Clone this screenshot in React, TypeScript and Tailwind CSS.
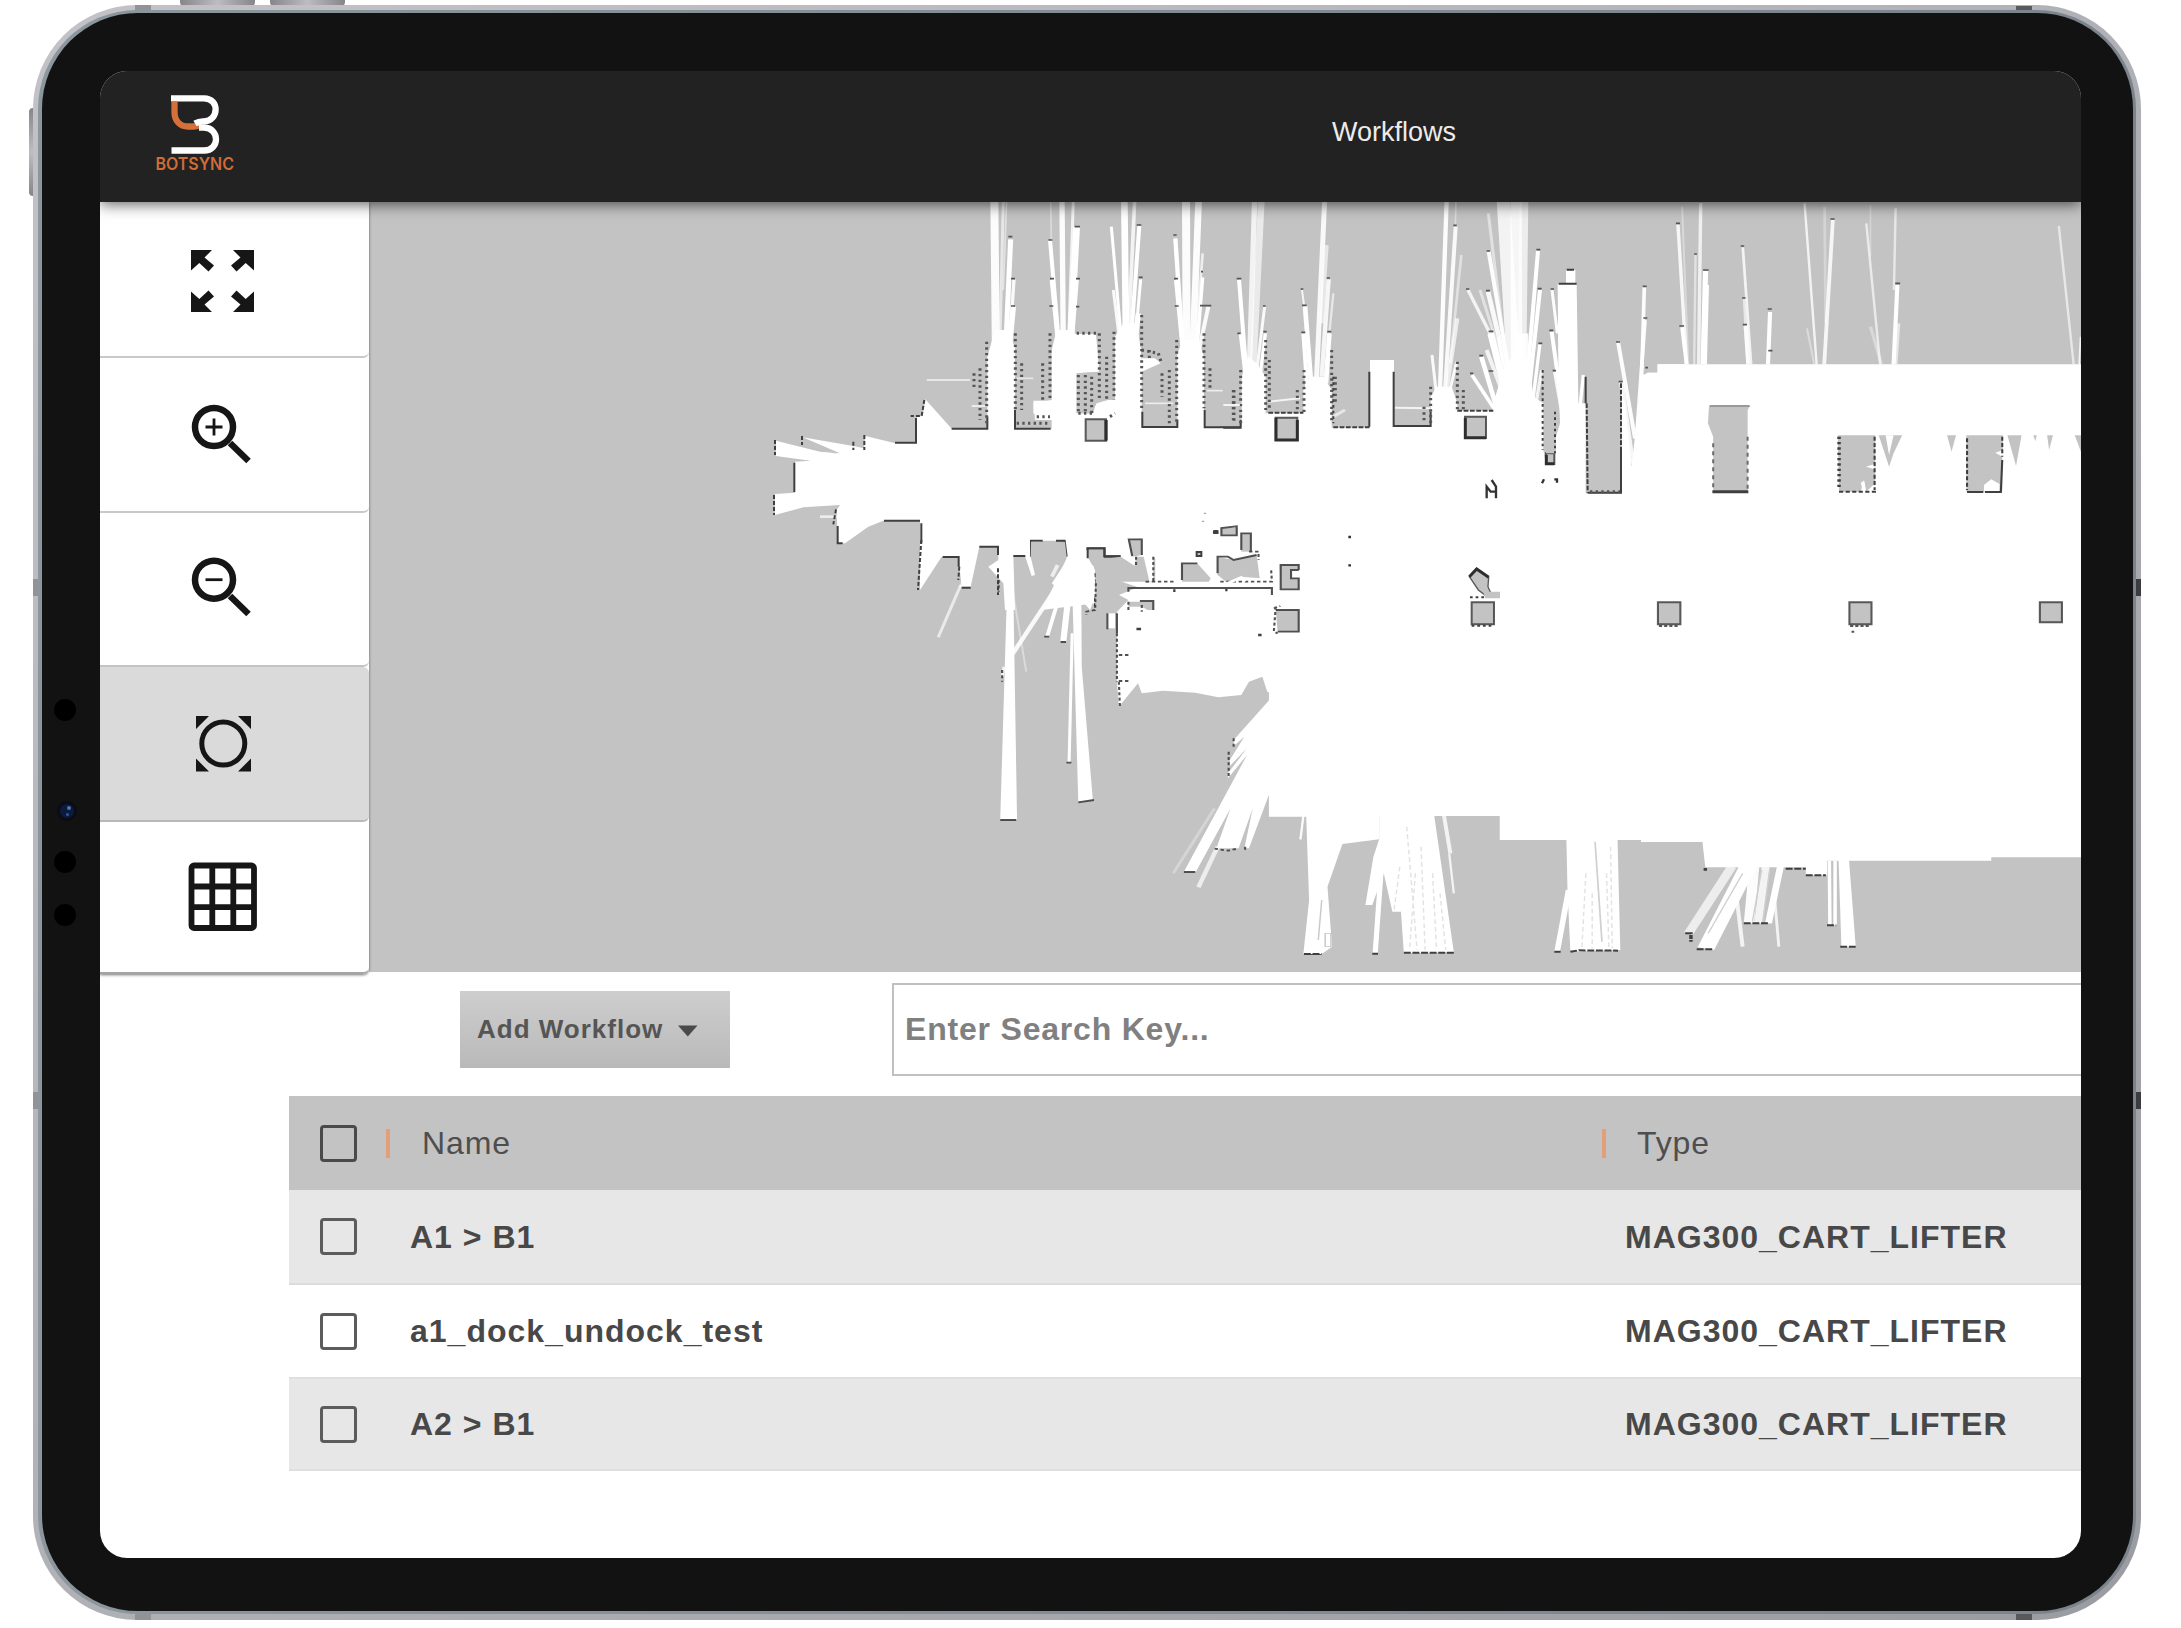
import type { ReactNode } from "react";

type Ray = [number, number, number, number, number, number?];

const Rays = ({ data }: { data: Ray[] }) => (
  <g stroke="#fff" fill="none">
    {data.map(([x1, y1, x2, y2, w, o], i) => (
      <line key={i} x1={x1} y1={y1} x2={x2} y2={y2} strokeWidth={w} strokeOpacity={o ?? 1} />
    ))}
  </g>
);

const GRAY = "#c3c3c3";
const WALL = "#3f3f3f";

const raysA: Ray[] = [
  [763, 30, 768, 520, 24, 0.95],
  [790, 30, 780, 450, 9, 0.6],
  [812, 148, 795, 520, 15],
  [822, 268, 805, 520, 10, 0.9],
  [820, 350, 800, 560, 16],
  [800, 30, 790, 300, 5, 0.5],
  [930, 150, 962, 520, 12],
  [935, 270, 960, 520, 12],
  [966, 30, 970, 480, 16, 0.95],
  [1000, 30, 985, 480, 9, 0.8],
  [1010, 110, 990, 480, 20],
  [1012, 270, 995, 480, 9],
  [932, 30, 934, 150, 5, 0.4],
  [1114, 110, 1145, 460, 9],
  [1120, 300, 1140, 460, 9, 0.9],
  [1153, 30, 1158, 440, 20],
  [1184, 30, 1165, 440, 11, 0.8],
  [1198, 108, 1172, 460, 12],
  [1202, 268, 1185, 460, 9],
  [1195, 370, 1180, 500, 16],
  [1306, 145, 1330, 500, 13],
  [1308, 270, 1330, 500, 12],
  [1338, 30, 1340, 490, 24, 0.95],
  [1376, 30, 1358, 490, 20, 0.95],
  [1388, 190, 1365, 490, 8, 0.7],
  [1388, 262, 1370, 490, 10],
  [1405, 350, 1375, 490, 12, 0.9],
  [560, 570, 690, 570, 5, 0.8],
  [695, 648, 742, 648, 5, 0.8],
  [1215, 640, 1300, 640, 5, 0.7],
  [1400, 602, 1448, 602, 5, 0.7],
  [1450, 645, 1500, 645, 6, 0.8],
  [830, 565, 880, 565, 5, 0.6],
  [240, 980, 290, 980, 8, 0.7],
];

const raysB: Ray[] = [
  [868, 400, 860, 788, 8],
  [840, 240, 712, 462, 12, 0.9],
  [845, 250, 803, 408, 10],
  [862, 250, 845, 424, 16],
  [600, 190, 575, 262, 5, 0.6],
  [577, 255, 518, 412, 8, 0.65],
  [708, 240, 748, 515, 5, 0.4],
  [1240, 925, 1132, 1120, 8, 0.3],
  [1248, 1040, 1198, 1162, 12, 0.7],
  [1472, 950, 1464, 1018, 4, 0.8],
  [830, 195, 815, 230, 10, 0.7],
  [690, 500, 685, 530, 8, 0.8],
];

const raysC: Ray[] = [
  [57, 268, 80, 560, 12],
  [60, 430, 75, 560, 8],
  [104, 30, 88, 540, 16, 0.8],
  [124, 30, 98, 560, 20, 0.65],
  [134, 350, 108, 560, 9, 0.9],
  [136, 430, 120, 560, 10],
  [246, 300, 252, 345, 6, 0.8],
  [255, 348, 275, 600, 14],
  [250, 430, 262, 600, 12],
  [314, 30, 288, 600, 15, 0.9],
  [326, 268, 305, 560, 13, 0.85],
  [320, 165, 305, 400, 12, 0.6],
  [340, 310, 315, 560, 7, 0.6],
  [328, 430, 318, 580, 14],
  [680, 30, 660, 600, 13, 0.95],
  [707, 110, 675, 600, 12, 0.9],
  [724, 195, 690, 520, 8, 0.5],
  [712, 385, 680, 600, 12, 0.7],
  [636, 495, 650, 620, 9, 0.9],
  [710, 515, 690, 600, 9, 0.9],
  [708, 30, 706, 110, 5, 0.4],
  [850, 30, 885, 600, 40, 0.8],
  [888, 30, 890, 600, 34, 0.85],
  [912, 30, 905, 600, 26, 0.7],
  [805, 70, 860, 520, 9, 0.5],
  [806, 185, 880, 620, 12, 0.95],
  [744, 300, 815, 440, 10, 0.8],
  [780, 300, 850, 520, 9, 0.5],
  [804, 305, 880, 620, 14, 0.9],
  [812, 430, 870, 660, 20],
  [784, 500, 835, 670, 14],
  [756, 555, 825, 660, 11],
  [835, 440, 870, 640, 10, 0.9],
  [800, 480, 860, 640, 12, 0.8],
  [954, 182, 915, 640, 12],
  [960, 300, 925, 620, 12],
  [960, 460, 930, 700, 10],
  [965, 540, 938, 700, 10, 0.8],
  [905, 430, 900, 640, 40, 0.9],
  [996, 300, 1012, 430, 9, 0.95],
  [995, 425, 1025, 640, 12],
  [1003, 545, 1030, 700, 8, 0.9],
  [1090, 555, 1080, 650, 10],
  [1194, 455, 1245, 745, 12, 0.95],
  [1204, 575, 1238, 820, 14, 0.85],
  [1273, 290, 1262, 660, 11, 0.95],
  [1275, 390, 1250, 740, 11, 0.95],
  [145, 635, 240, 625, 6, 0.8],
  [525, 653, 630, 655, 6, 0.8],
  [340, 680, 375, 660, 9, 0.6],
];

const raysD: Ray[] = [
  [110, 103, 135, 523, 10, 0.85],
  [122, 50, 140, 523, 6, 0.35],
  [122, 412, 135, 523, 11],
  [176, 40, 170, 523, 10, 0.75],
  [161, 195, 157, 523, 7, 0.5],
  [190, 243, 183, 523, 15],
  [194, 285, 188, 523, 12],
  [298, 172, 322, 523, 8, 0.8],
  [302, 325, 312, 523, 8, 0.6],
  [306, 405, 314, 523, 12, 0.85],
  [377, 366, 371, 523, 12],
  [477, 40, 512, 523, 7, 0.8],
  [484, 415, 505, 523, 6, 0.4],
  [559, 90, 534, 523, 11, 0.85],
  [535, 50, 538, 400, 8, 0.3],
  [656, 100, 696, 523, 7, 0.65],
  [668, 45, 668, 200, 5, 0.3],
  [668, 410, 700, 523, 10, 0.35],
  [741, 55, 736, 300, 7, 0.6],
  [746, 285, 735, 523, 12],
  [750, 400, 742, 523, 9, 0.6],
  [1214, 108, 1257, 523, 7, 0.6],
  [1277, 440, 1273, 523, 5, 0.8],
];

const raysE: Ray[] = [
  [315, 700, 305, 942, 9],
  [180, 528, 175, 598, 4, 0.8],
  [425, 528, 436, 640, 7, 0.8],
  [434, 640, 442, 760, 4, 0.8],
  [642, 750, 622, 935, 10],
  [926, 680, 851, 880, 17, 0.7],
  [960, 660, 881, 926, 30],
  [965, 680, 956, 850, 18, 0.95],
  [985, 680, 972, 850, 14, 0.8],
  [1012, 670, 990, 850, 12],
  [935, 780, 945, 920, 7, 0.8],
  [1000, 760, 1008, 920, 5, 0.8],
  [1096, 662, 1097, 856, 6],
  [1106, 662, 1106, 856, 6],
];

const Obstacle = ({ d, w = 6 }: { d: string; w?: number }) => (
  <path d={d} fill={GRAY} stroke={WALL} strokeWidth={w} strokeOpacity={0.85} />
);

const FloorMap = () => (
  <svg width="1712" height="770" viewBox="369 202 1712 770" className="block shrink-0">
    <rect x="369" y="202" width="1712" height="770" fill={GRAY} />

    {/* central aisles and main hall */}
    <g transform="translate(1220 190) scale(.33333)">
      <path
        fill="#fff"
        d="M-10 712H65V560L85 500L110 520L137 560V670H250V600L270 560H310L335 600V713H450V510H522V708H632V620L650 590H695L712 640V662H820V640L850 540L890 480L930 540L940 620L970 640V780L978 822H1003L1005 750L1020 700L1015 540V280H1070L1075 640L1097 640V910H1205V600L1215 640L1235 830L1250 690L1275 620L1283 548H1312V523H1400V1450H40L-10 960Z"
      />
      <Rays data={raysC} />
      <path fill="#fff" d="M1038 240H1066V285H1038ZM1013 283H1068L1062 480L1070 700H1030L1015 480Z" />
      <path fill="#fff" d="M845 560H925L945 720H810Z" opacity=".8" />
      <Obstacle d="M167 683H232V750H167Z" />
      <Obstacle d="M735 680H798V744H735Z" />
      <Obstacle d="M755 1237H822V1303H755Z" />
      <Obstacle d="M1313 1237H1385V1303H1313Z" />
      <Obstacle d="M978 790H1003V822H978Z" />
      <Obstacle d="M748 1160L770 1135L806 1162L804 1190L815 1215H795L775 1200Z" w={4} />
      <path fill={GRAY} d="M970 640L1008 660V790H978Z" />
      <path fill={GRAY} d="M790 1205H840V1225H795Z" />
      <path fill="none" stroke="#2e2e2e" strokeWidth="9" d="M168 683V750H232V690M736 684V743H798M979 795V821H1003M748 1160L770 1137L806 1162" />
      <g fill="none" stroke={WALL} strokeWidth="6">
        <path d="M0 713H62V690M448 545V710M521 545V708H632V665M1016 281H1070M1040 239H1062M1097 560V640M1103 908H1203V780" />
        <path strokeDasharray="14 5" d="M1100 640L1103 908M1203 580V780M340 712H448M712 662H820M145 668H250" />
        <path strokeDasharray="8 9" d="M968 540V780M1005 665V790M755 1307H822M1313 1307H1385M750 1222H800M340 560V700" />
      </g>
      <g fill="none" stroke="#555" strokeWidth="9" strokeDasharray="7 10">
        <path d="M62 540V700M42 600V700M137 450V660M148 510V660M252 540V670M232 600V670M335 480V700M346 560V640M632 590V700M612 650V700M712 515V662M730 600V662M1110 905H1200" />
      </g>
      <path
        stroke="#555"
        strokeWidth="5"
        d="M50 266h14M129 348h8M130 425h10M52 430h10M242 297h8M246 346h14M244 427h12M320 264h10M322 425h12M800 183h10M738 297h10M798 302h12M806 424h14M778 497h12M750 550h10M806 543h14M949 179h12M953 296h12M955 460h12M992 297h10M988 421h12M998 542h10M1188 456h12M1196 575h12M1268 289h12M1270 384h12M1276 533h8M700 106h10"
      />
      <g stroke="#333" fill="none" strokeWidth="7">
        <path d="M800 925V890L812 905H825M815 870L828 890V925M966 880l6 -12M1003 868h8v10" />
        <path d="M385 1041h8M385 1126h8" />
      </g>
    </g>

    {/* west wing and rack aisles */}
    <g transform="translate(740 190) scale(.33333)">
      <path
        fill="#fff"
        d="M165 815L212 812L108 798V752L240 785L300 790L188 742L340 768L372 775L376 738L460 758H530V680L548 678L556 628L635 716H742V500L765 420H800L825 470V716H935V690L880 670V640L935 630V480L950 420H990L1008 432H1068L1078 545L1010 550V670H1060L1070 630H1125V440L1150 400H1190L1203 480V505H1245L1262 520L1205 545V712H1312V490L1330 450H1375L1392 500V712H1450V1190H1230L1215 1150L1190 1140L1140 1120V1100H1095V1075H1043L1045 1105L1065 1140L1068 1240L905 1260L945 1180L980 1105L975 1052H872V1100L885 1155L875 1158L855 1098H820L825 1260H795L790 1180L745 1130L775 1110V1070H718L692 1190H665L655 1100H605L540 1200V992H430L385 1010L315 1060H293L290 960L300 945L190 952L105 975V912L165 908Z"
      />
      <Rays data={raysA} />
      <path fill="#fff" d="M880 632H960V690H885Z" />
      <path fill={GRAY} d="M240 782L290 788V792L200 772Z" opacity=".5" />
      <path fill={GRAY} d="M1078 500H1122V625L1070 640L1055 670H1010V550L1078 545Z" />
      <Obstacle d="M1037 688H1098V752H1037Z" />
      <path fill="none" stroke="#2e2e2e" strokeWidth="10" d="M1098 690V752" />
      <g fill="none" stroke={WALL} strokeWidth="6">
        <path d="M528 684V758H465M825 660V716H932M742 680V716H635M1207 665V711H1312V690M1394 660V712H1500M544 1000V1060M432 992H540M608 1101H656V1130M718 1070H774V1095M820 1098H856M873 1100V1052H908M948 1052H974L980 1100M1043 1105V1075H1094V1100H1140M665 1193H692M163 818V906M293 1008V1060H308" />
        <path strokeDasharray="12 6" d="M553 630L545 678H512M105 750V795M102 915V975M186 738V765M340 755V780M373 735V780M544 1050L534 1200M288 958L280 1003M658 1130L655 1170M774 1135V1215M1065 1150V1255" />
      </g>
      <g fill="none" stroke="#555" strokeWidth="9" strokeDasharray="7 10">
        <path d="M740 455V700M720 535V690M702 550V600M826 430V660M845 520V660M930 430V630M908 520V630M1015 555V670M1036 555V670M1055 560V670M1122 425V630M1100 500V630M1078 430V630M1205 375V660M1228 480V510M1310 450V700M1288 540V700M1266 550V620M1392 430V655M1410 535V600M1480 600V690" />
        <path d="M1010 430H1070M1205 480L1255 490L1265 520M830 700H932M890 680H930M1015 670H1060M1110 680L1125 670" />
      </g>
      <g stroke="#555" strokeWidth="5">
        <path d="M813 266h12M813 348h12M925 150h12M930 266h12M928 348h12M1004 110h16M1008 266h12M1008 350h10M1190 105h14M1196 262h12M1302 266h12M1304 348h12M1380 347h34M805 140h12M1300 135h10M1383 245h6" />
      </g>
      <g fill="none" stroke={WALL} strokeWidth="6">
        <path d="M1420 1026h15" strokeWidth="12" />
        <path d="M1370 1086h14v12h-14z" fill={GRAY} />
      </g>
      <path fill={GRAY} d="M873 1055H905L915 1075L945 1070L975 1055L980 1100L940 1155L905 1170L872 1100Z" />
    </g>

    {/* south side rooms and long scan rays */}
    <g transform="translate(740 500) scale(.38267 .33333)">
      <path fill="#fff" d="M1030 190H1420V270L1400 300V585L1378 575L1365 530L1330 545L1310 585L1250 592L1190 578L1105 572L1050 580L1040 550L990 620L985 545V335L1010 300L990 285L1040 262L990 242Z" />
      <path fill="#fff" d="M700 190L680 960H724L713 190Z" />
      <path fill="#fff" d="M866 180L884 905L922 900L893 500L892 300L915 330L930 280L925 200L885 160L860 170L815 250L840 280Z" />
      <path
        fill="#fff"
        d="M1397 582L1290 720V738L1318 710L1280 780V798L1325 745L1275 820V835L1325 765L1160 1115L1190 1118L1282 925L1245 1045H1303L1340 925L1318 1045H1330L1382 885L1420 900V582Z"
      />
      <path fill="#fff" d="M958 340H980V385H958Z" />
      <Rays data={raysB} />
      <g fill={GRAY}>
        <path d="M1015 118L1048 116L1052 165L1025 170Z" />
        <path d="M1035 170H1055L1070 245L1080 245V170L1085 175V245L1060 248L1030 205Z" />
        <path d="M1155 190H1195L1230 235L1225 245H1155Z" />
        <path d="M1248 170L1290 180L1350 165L1358 235L1310 230L1275 250L1248 225Z" />
        <path d="M1258 84H1300V106H1258Z" />
        <path d="M1310 100H1335V155H1310Z" />
        <path d="M1410 195H1460V210H1440V235H1460V268H1413Z" />
        <path d="M1400 330H1460V395H1405Z" />
        <path d="M1015 305H1080V330H1065L1050 320H1015Z" />
        <path d="M930 180L995 170L1035 200L1060 245H990V285L1015 300L985 335H928Z" />
      </g>
      <g fill="none" stroke={WALL} strokeWidth="5.5" strokeOpacity=".9">
        <path d="M1015 275V264H1390V285M1155 240V190H1195M1248 220V170H1275L1290 180L1350 165M1310 150V100H1335V155M1258 106V84L1298 79V106ZM1025 168L1016 118H1050V165M1460 210H1440V235H1460V268H1413V195H1460V210M1400 330H1460V395H1405M1080 330V303H1045M985 340V400M960 340V388M680 960H722M884 907L925 900M1160 1116H1190M1475 1362H1518M853 788H866M795 410H808M838 426H852M908 150V145H952V168H995" />
        <path strokeDasharray="9 7" d="M1080 170V245M1060 245H1140M1255 245H1390L1388 210M1400 320L1395 395L1405 400M985 400V545M990 545L993 625M990 465H1015M990 543H1015M1015 330V305M1050 315V335M930 250L928 330L905 335V345M1290 715V740M1277 755V835M1240 1046L1275 1052L1300 1046M1320 1040V1050M685 510V545M676 240V275M1035 170V200M1330 155H1355V180M1395 325L1412 318" />
      </g>
      <path d="M1036 387h12M1354 405h9M1132 272h6M1268 270h6M1236 97h14" stroke={WALL} strokeWidth="8" />
      <path d="M1215 38v4M1210 62v4" stroke="#aaa" strokeWidth="6" />
      <path d="M1270 252L1310 232L1320 245" stroke="#fff" strokeWidth="8" fill="none" />
    </g>

    {/* east hall */}
    <g transform="translate(1640 190) scale(.345 .33333)">
      <path fill="#fff" d="M0 560L22 548H52V523H1290V1450H0Z" />
      <Rays data={raysD} />
      <g fill={GRAY}>
        <path d="M200 648H318L312 660V905H212V740L197 700Z" />
        <path d="M573 736H682V880L655 905L648 870L640 905H577Z" />
        <path d="M692 736H760L735 790L722 830ZM890 736H916L903 785ZM1065 736H1106L1090 828ZM1180 736H1197L1186 780ZM1260 736H1280V790ZM1140 736h10l-4 18z" />
        <path d="M946 736H1052V780L1030 788L1050 800V905H946Z" />
      </g>
      <path fill="#fff" d="M997 885L1018 868L1042 882V903H997ZM655 830L680 822V838ZM640 878L650 872L655 900H645ZM712 736L722 795L735 736Z" />
      <g fill="none" stroke={WALL} strokeWidth="6">
        <path strokeWidth="9" d="M210 905H314" />
        <path d="M1000 906H1046L1050 810M948 906H995" />
        <path strokeDasharray="12 12" strokeOpacity=".7" d="M212 760V905M312 740V905" />
        <path stroke="#999" d="M202 648H318" />
        <path strokeDasharray="12 7" d="M577 905H685M680 740V900M948 745V900M1050 740V800" />
        <path strokeDasharray="7 9" strokeWidth="10" d="M577 740V900" />
      </g>
      <Obstacle d="M52 1237H117V1303H52Z" />
      <Obstacle d="M607 1237H671V1303H607Z" />
      <Obstacle d="M1159 1237H1223V1297H1159Z" />
      <path stroke="#555" strokeWidth="6" strokeDasharray="9 6" d="M55 1308H115M609 1308H669M613 1325h8" />
      <path stroke="#555" strokeWidth="5" d="M104 100h12M183 240h16M292 168h10M296 324h10M298 404h12M370 357h12M372 482h12M552 87h12M740 280h14M114 408h14M157 192h8" />
    </g>

    {/* south edge of the hall */}
    <g transform="translate(1200 640) scale(.57422 .33333)">
      <path fill="#fff" d="M120 530V30H1545V652H1378V662H1092V706H1055V682H880L875 606H768V600H522V528H312V598L248 612L222 740L230 920L212 942H180L190 780L185 530Z" />
      <path fill="#fff" d="M312 528V598L302 650L288 795H300L320 700L335 815H350L355 940L442 936L408 528Z" />
      <path fill="#fff" d="M638 590L640 750L645 935L732 930L727 590Z" />
      <path fill="#fff" d="M1112 655L1117 922H1142L1130 655Z" />
      <Rays data={raysE} />
      <g stroke="#e2e2e2" strokeWidth="2.500" fill="none">
        <path d="M688 605L700 905" stroke="#d0d0d0" strokeWidth="3" />
        <path strokeDasharray="14 9" d="M375 700L365 930M385 620L392 930M405 700L412 930M418 760L428 930M348 680L338 810M360 560L378 930M672 700L665 925M715 620L718 925M683 760V925M708 700L712 925" />
        <path stroke="#c8c8c8" d="M212 780L206 900M218 880V920H228V880Z" />
        <path stroke="#cfcfcf" d="M945 700L885 880M978 690L962 845M992 690L980 845" />
      </g>
      <g stroke={WALL} strokeWidth="6" fill="none" strokeDasharray="12 3">
        <path d="M181 942H212M355 938H442M645 935L660 931L728 932M865 928H895M947 850H992M1115 920H1143M1055 706H1090M1020 686H1055M880 684V692M845 880H855V905M300 941H310M617 935H628M1092 856H1108" />
      </g>
    </g>
  </svg>
);

const Logo = () => (
  <svg width="84" height="84" viewBox="153 90 84 84" className="block">
    <g fill="none" strokeWidth="6.300">
      <path stroke="#d4703a" d="M174.500 102V112C174.500 121 180 126.500 188 126.500H194C197 126.500 198 126 200 124.500" />
      <path stroke="#fff" d="M171 98.300H204C220 98.300 219 121 204 121.300C200 121.300 199 121 195 123.500" />
      <path stroke="#fff" d="M199 127.500H204C220 128 220 150.500 204 150.500H171.500" />
    </g>
    <text x="155.500" y="169.500" textLength="78.500" lengthAdjust="spacingAndGlyphs" fill="#d06c37" fontSize="17.500" fontWeight="600" fontFamily="Inter, sans-serif">
      BOTSYNC
    </text>
  </svg>
);

const Tool = ({ cy, className, children }: { cy: string; className: string; children: ReactNode }) => (
  <button className={`flex w-[269px] shrink-0 items-center justify-center rounded-r-[6px] border-b-2 pr-[23px] ${className}`}>
    <svg width="80" height="80" viewBox={`183 ${cy} 80 80`}>
      {children}
    </svg>
  </button>
);

const Corner = () => <path d="M191 250H212L204.500 257.500L214 265.500L208.500 271.500L199.300 263L191 270.500Z" fill="#161616" />;

const Sidebar = () => (
  <nav className="relative flex h-[772px] w-[269px] shrink-0 flex-col rounded-br-[6px] bg-white text-[#161616] shadow-[0_1px_3px_rgba(0,0,0,0.55)]">
    <Tool cy="239" className="h-[156px] border-[#c9c9c9] bg-white">
      <Corner />
      <g transform="matrix(-1 0 0 1 445 0)"><Corner /></g>
      <g transform="matrix(1 0 0 -1 0 562)"><Corner /></g>
      <g transform="matrix(-1 0 0 -1 445 562)"><Corner /></g>
    </Tool>
    <Tool cy="394.5" className="h-[155px] border-[#c9c9c9] bg-white">
      <g fill="none" stroke="#161616">
        <circle cx="214" cy="426.500" r="19" strokeWidth="6.500" />
        <path d="M230 442.500L248.500 460.500" strokeWidth="6.500" />
        <path d="M205.500 426.500H222.500M214 418V435" strokeWidth="2.800" />
      </g>
    </Tool>
    <Tool cy="549" className="h-[154px] border-[#c3c3c3] bg-white">
      <g fill="none" stroke="#161616">
        <circle cx="214" cy="579.700" r="19" strokeWidth="6.500" />
        <path d="M230 596L248.500 614" strokeWidth="6.500" />
        <path d="M205.500 579.700H222.500" strokeWidth="2.800" />
      </g>
    </Tool>
    <Tool cy="703.5" className="h-[155px] border-[#b9b9b9] bg-[#dadada]">
      <circle cx="223.300" cy="743" r="21.500" fill="none" stroke="#161616" strokeWidth="5" />
      <path fill="#161616" d="M196 715.500H209L196 728.500ZM251 715.500H238L251 728.500ZM196 771H209L196 758ZM251 771H238L251 758Z" />
    </Tool>
    <Tool cy="857" className="h-[152px] border-[#a5a5a5] bg-white">
      <rect x="191.500" y="865.500" width="62.500" height="62.500" rx="2.500" fill="none" stroke="#161616" strokeWidth="5.800" />
      <path d="M212.300 864V930M233.300 864V930M190 886.500H256M190 907.200H256" stroke="#161616" strokeWidth="5.800" />
    </Tool>
  </nav>
);

const Checkbox = ({ className }: { className: string }) => (
  <span className={`ml-[31px] size-[37px] shrink-0 rounded-[4px] border-[3.5px] ${className}`} />
);

const rows = [
  { name: "A1 > B1", type: "MAG300_CART_LIFTER", cls: "h-[95px] border-b-2 border-[#dcdcdc] bg-[#e7e7e7]" },
  { name: "a1_dock_undock_test", type: "MAG300_CART_LIFTER", cls: "h-[92px] bg-white" },
  { name: "A2 > B1", type: "MAG300_CART_LIFTER", cls: "h-[94px] border-y-2 border-[#dfdfdf] bg-[#e7e7e7]" },
];

export default function App() {
  return (
    <div className="relative h-[1628px] w-[2181px] overflow-hidden bg-white pl-[33px] pt-[5px] font-['Liberation_Sans',Arial,sans-serif]">
      {/* hardware buttons */}
      <div className="absolute left-[180px] top-[-6px] h-[14px] w-[75px] rounded-[6px] bg-gradient-to-r from-[#85858a] via-[#bcbcc2] to-[#85858a]" />
      <div className="absolute left-[270px] top-[-6px] h-[14px] w-[75px] rounded-[6px] bg-gradient-to-r from-[#85858a] via-[#bcbcc2] to-[#85858a]" />
      <div className="absolute left-[29px] top-[108px] h-[88px] w-[10px] rounded-[4px] bg-gradient-to-b from-[#85858a] via-[#bcbcc2] to-[#85858a]" />

      <div className="relative h-[1615px] w-[2108px] rounded-[104px] bg-gradient-to-br from-[#c2c2c7] via-[#b0b1b6] to-[#9b9ba2] p-[5px]">
        {/* antenna bands */}
        <div className="absolute left-[102px] top-0 h-[6px] w-[16px] bg-[#929397]" />
        <div className="absolute right-[109px] top-px h-[5px] w-[16px] bg-[#5a5a5e]" />
        <div className="absolute bottom-0 left-[102px] h-[6px] w-[16px] bg-[#929397]" />
        <div className="absolute bottom-0 right-[109px] h-[6px] w-[16px] bg-[#58585c]" />
        <div className="absolute left-0 top-[574px] h-[17px] w-[5px] bg-[#929397]" />
        <div className="absolute left-0 top-[1087px] h-[17px] w-[5px] bg-[#929397]" />
        <div className="absolute right-0 top-[574px] h-[17px] w-[6px] bg-[#3c3c3f]" />
        <div className="absolute right-0 top-[1087px] h-[17px] w-[6px] bg-[#3c3c3f]" />

        <div className="relative h-[1604px] w-[2098px] rounded-[99px] bg-gradient-to-r from-[#8b969d] to-[#7b838b] pb-[3px] pl-[4px] pr-[3px] pt-[3px]">
          <div className="relative h-[1598px] w-[2091px] rounded-[96px] bg-[#121212] pl-[58px] pt-[58px]">
            {/* sensors */}
            <div className="absolute left-[12px] top-[686px] size-[22px] rounded-full bg-black" />
            <div className="absolute left-[15px] top-[788px] size-[20px] rounded-full bg-[#0b0d14]">
              <div className="absolute left-[3px] top-[3px] size-[14px] rounded-full bg-[#0d1a3c]" />
              <div className="absolute left-[10px] top-[5px] size-[4px] rounded-full bg-[#4a78b8]" />
              <div className="absolute left-[9px] top-[12px] size-[3px] rounded-full bg-[#2f5aa8]" />
            </div>
            <div className="absolute left-[12px] top-[838px] size-[22px] rounded-full bg-black" />
            <div className="absolute left-[12px] top-[891px] size-[22px] rounded-full bg-black" />

            <main className="flex h-[1487px] w-[1981px] flex-col overflow-hidden rounded-[27px] bg-white">
              <header className="relative z-10 flex h-[131px] shrink-0 bg-[#222] pl-[53px] pt-[19px] shadow-[0_2px_14px_rgba(0,0,0,0.65)]">
                <Logo />
                <h1 className="ml-[1095px] mt-[26px] text-[27px] leading-[32px] text-[#ececec]">Workflows</h1>
              </header>

              <section className="flex h-[770px] shrink-0 items-start">
                <Sidebar />
                <FloorMap />
              </section>

              <section className="flex h-[124px] shrink-0">
                <button className="ml-[360px] mt-[19px] flex h-[77px] w-[270px] shrink-0 items-center bg-gradient-to-b from-[#cecece] to-[#b9b9b9] pl-[17px] text-[26px] font-bold tracking-[1px] text-[#555]">
                  Add Workflow
                  <svg width="20" height="12" viewBox="0 0 20 12" className="ml-[15px] mt-[2px]">
                    <path d="M0 .5H19.500L9.800 11.500Z" fill="#4a4a4a" />
                  </svg>
                </button>
                <input
                  aria-label="Search"
                  placeholder="Enter Search Key..."
                  className="ml-[162px] mt-[11px] h-[93px] w-[1300px] shrink-0 border-2 border-[#c0c0c0] bg-white pl-[11px] text-[32px] font-bold tracking-[0.8px] placeholder:text-[#808080]"
                />
              </section>

              <section className="ml-[189px] w-[1792px]">
                <div className="flex h-[94px] items-center bg-[#c3c3c3] text-[32px] tracking-[0.9px] text-[#4e4e4e]">
                  <Checkbox className="border-[#4a4a4a]" />
                  <span className="ml-[29px] h-[29px] w-[4px] bg-[#e39f7c]" />
                  <span className="ml-[32px] w-[1180px]">Name</span>
                  <span className="h-[29px] w-[4px] bg-[#e39f7c]" />
                  <span className="ml-[31px]">Type</span>
                </div>
                {rows.map((r) => (
                  <div key={r.name} className={`flex items-center text-[32px] font-bold tracking-[1px] text-[#484848] ${r.cls}`}>
                    <Checkbox className="border-[#5c5c5c]" />
                    <span className="ml-[53px] w-[1215px]">{r.name}</span>
                    <span>{r.type}</span>
                  </div>
                ))}
              </section>
            </main>
          </div>
        </div>
      </div>
    </div>
  );
}
